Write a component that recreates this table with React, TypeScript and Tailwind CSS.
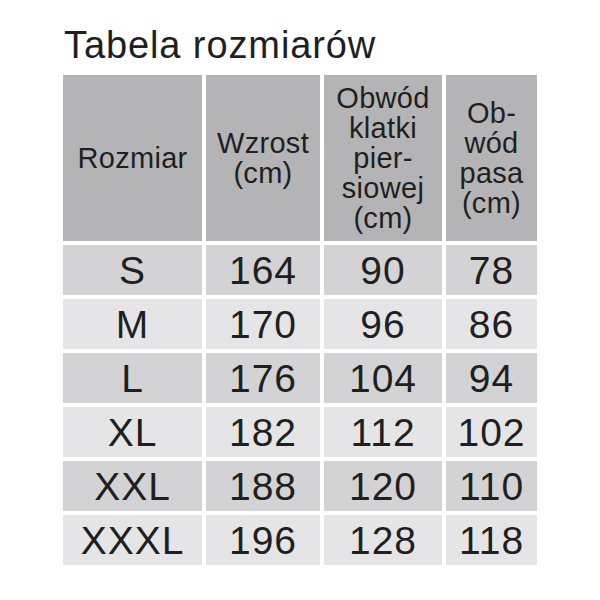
import type { ReactNode } from 'react';

const headers: ReactNode[] = [
  'Rozmiar',
  <>Wzrost<br />(cm)</>,
  <>Obwód<br />klatki<br />pier-<br />siowej<br />(cm)</>,
  <>Ob-<br />wód<br />pasa<br />(cm)</>,
];

const rows = [
  ['S', '164', '90', '78'],
  ['M', '170', '96', '86'],
  ['L', '176', '104', '94'],
  ['XL', '182', '112', '102'],
  ['XXL', '188', '120', '110'],
  ['XXXL', '196', '128', '118'],
];

export default function App() {
  return (
    <div
      className="h-[600px] w-[600px] bg-white pl-[63px] pt-[26px] text-[#1f1f1f]"
      style={{ fontFamily: '"Liberation Sans", Arial, sans-serif' }}
    >
      <h1 className="ml-[1px] text-[38px] leading-[38px] tracking-[0.9px]">Tabela rozmiarów</h1>
      <div className="mt-[11px] grid grid-cols-[139px_114px_118px_91px] grid-rows-[166px_repeat(6,50px)] gap-x-[4px] gap-y-[4px]">
        {headers.map((h, i) => (
          <div
            key={i}
            className="flex items-center justify-center bg-[#b4b4b6] text-center text-[29px] leading-[30px] tracking-[0.3px]"
          >
            <span>{h}</span>
          </div>
        ))}
        {rows.map((row, r) =>
          row.map((cell, c) => (
            <div
              key={`${r}-${c}`}
              className={
                'flex items-center justify-center text-[39px] leading-none tracking-[1px] ' +
                (r % 2 === 0 ? 'bg-[#d3d3d5]' : 'bg-[#e5e5e7]')
              }
            >
              {cell}
            </div>
          )),
        )}
      </div>
    </div>
  );
}
